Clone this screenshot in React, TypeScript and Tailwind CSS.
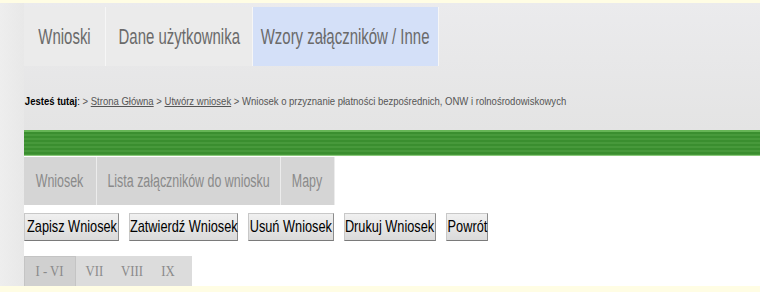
import React from 'react';

const sans = "font-['Liberation_Sans',Arial,sans-serif]";

const topTabs = [
  { label: 'Wnioski', w: 'w-[82px]', active: false },
  { label: 'Dane użytkownika', w: 'w-[147px]', active: false },
  { label: 'Wzory załączników / Inne', w: 'w-[186px]', active: true },
];

const subTabs = [
  { label: 'Wniosek', w: 'w-[73px]' },
  { label: 'Lista załączników do wniosku', w: 'w-[184px]' },
  { label: 'Mapy', w: 'w-[54px]' },
];

const actions = [
  { label: 'Zapisz Wniosek', w: 'w-[95px]' },
  { label: 'Zatwierdź Wniosek', w: 'w-[109px]' },
  { label: 'Usuń Wniosek', w: 'w-[86px]' },
  { label: 'Drukuj Wniosek', w: 'w-[92px]' },
  { label: 'Powrót', w: 'w-[42px]' },
];

const sections = [
  { label: 'I - VI', w: 'w-[52px]', active: true },
  { label: 'VII', w: 'w-[36px]', active: false },
  { label: 'VIII', w: 'w-[40px]', active: false },
  { label: 'IX', w: 'w-[32px]', active: false },
];

export default function App() {
  return (
    <div className={`w-[760px] h-[292px] bg-[#fffde4] pt-[3px] ${sans}`}>
      <div className="flex h-[283px] bg-white">
        {/* left margin strip */}
        <div className="w-[24px] bg-gradient-to-r from-[#eeeeee] to-[#e8e8e8]" />

        <div className="flex-1 flex flex-col">
          {/* header */}
          <div className="h-[127px] bg-gradient-to-b from-[#ebebed] to-[#e4e4e4] flex flex-col">
            <div className="flex mt-[4px] h-[59px]">
              {topTabs.map((t) => (
                <div
                  key={t.label}
                  className={`${t.w} flex items-center justify-center text-[22px] text-[#6a6a6a] border-r border-[#f6f6f6] whitespace-nowrap ${
                    t.active ? 'bg-[#d4e0f8]' : 'bg-[#ebebeb]'
                  }`}
                >
                  <span className="inline-block scale-x-[0.68]">{t.label}</span>
                </div>
              ))}
            </div>
            <div className="mt-[27px] text-[11px] text-[#555] whitespace-nowrap pl-[1px] origin-left scale-x-[0.865]">
              <span className="font-bold text-black">Jesteś tutaj</span>
              <span className="text-black">:</span> &gt;{' '}
              <span className="underline">Strona Główna</span> &gt;{' '}
              <span className="underline">Utwórz wniosek</span> &gt; Wniosek o przyznanie płatności
              bezpośrednich, ONW i rolnośrodowiskowych
            </div>
          </div>

          {/* green bar */}
          <div className="h-[26px] border-t-2 border-[#66b556] bg-[repeating-linear-gradient(180deg,#3a8e2f_0px,#3a8e2f_2px,#47993b_2px,#47993b_4px)] border-b border-b-[#8cc97c]" />

          {/* sub tabs */}
          <div className="flex h-[48px] mt-[1px]">
            {subTabs.map((t) => (
              <div
                key={t.label}
                className={`${t.w} flex items-center justify-center bg-[#d5d5d5] text-[18px] text-[#8a8a8a] border-r border-[#ececec] whitespace-nowrap`}
              >
                <span className="inline-block scale-x-[0.69]">{t.label}</span>
              </div>
            ))}
          </div>

          {/* action buttons */}
          <div className="flex gap-[10px] mt-[8px]">
            {actions.map((a) => (
              <button
                key={a.label}
                className={`${a.w} h-[28px] flex items-center justify-center bg-gradient-to-b from-[#f0f0f0] to-[#dadada] border border-[#c8c8c8] border-r-[#8c8c8c] border-b-[#7a7a7a] text-[17px] text-black whitespace-nowrap`}
              >
                <span className="inline-block scale-x-[0.75]">{a.label}</span>
              </button>
            ))}
          </div>

          {/* section tabs */}
          <div className="flex mt-[15px] h-[30px] w-[168px] bg-[#dcdcdc]">
            {sections.map((s) => (
              <div
                key={s.label}
                className={`${s.w} flex items-center justify-center text-[15px] text-[#8a8a8a] font-['Liberation_Serif',serif] ${
                  s.active ? 'bg-[#d0d0d0] border border-[#c4c4c4] border-b-0' : ''
                }`}
              >
                <span className="inline-block scale-x-[0.85]">{s.label}</span>
              </div>
            ))}
          </div>
        </div>
      </div>
    </div>
  );
}
